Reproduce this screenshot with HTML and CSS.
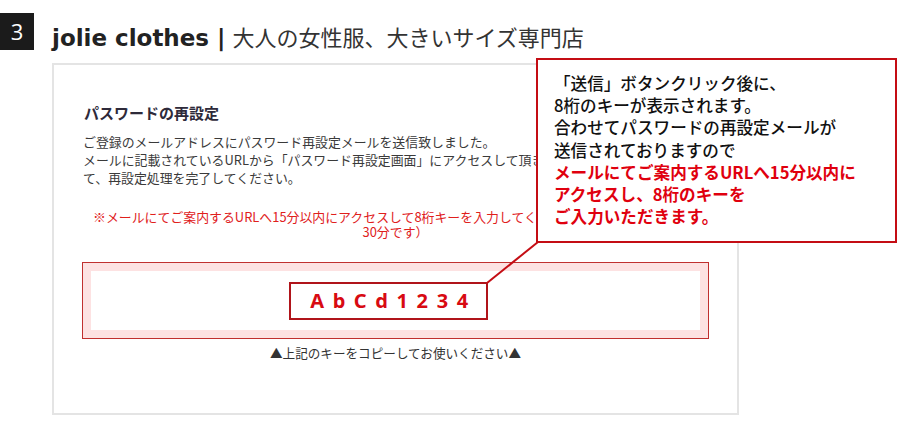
FILE: index.html
```html
<!DOCTYPE html>
<html lang="ja">
<head>
<meta charset="utf-8">
<link rel="stylesheet" href="styles.css">
</head>
<body>
<div class="page">
  <div class="header">
    <div class="badge">3</div>
    <h1 class="title"><span class="brand">jolie clothes |</span> <span class="sub">大人の女性服、大きいサイズ専門店</span></h1>
  </div>
  <div class="card">
    <h2 class="heading">パスワードの再設定</h2>
    <p class="desc">ご登録のメールアドレスにパスワード再設定メールを送信致しました。<br>メールに記載されているURLから「パスワード再設定画面」にアクセスして頂きまし<br>て、再設定処理を完了してください。</p>
    <p class="note">※メールにてご案内するURLへ15分以内にアクセスして8桁キーを入力してください。（キーの有効期限は<br>30分です）</p>
    <div class="keyframe">
      <div class="keyinner">
        <div class="key">A b C d 1 2 3 4</div>
      </div>
    </div>
    <p class="caption">▲上記のキーをコピーしてお使いください▲</p>
  </div>
  <svg class="connector" width="900" height="425" viewBox="0 0 900 425"><line x1="487" y1="283" x2="538" y2="242" stroke="#c40d14" stroke-width="2"/></svg>
  <div class="callout">
    <p>「送信」ボタンクリック後に、<br>8桁のキーが表示されます。<br>合わせてパスワードの再設定メールが<br>送信されておりますので<br><strong>メールにてご案内するURLへ15分以内に<br>アクセスし、8桁のキーを<br>ご入力いただきます。</strong></p>
  </div>
</div>
</body>
</html>
```

FILE: styles.css
```css
html, body {
  margin: 0;
  padding: 0;
  background: #fff;
}
body {
  width: 900px;
  height: 425px;
  overflow: hidden;
  font-family: "Noto Sans CJK JP", "Noto Sans", sans-serif;
  color: #333;
}
.page {
  position: relative;
  width: 900px;
  height: 425px;
  padding-top: 13px;
  box-sizing: border-box;
}
.header {
  display: flex;
  align-items: center;
  height: 37px;
}
.badge {
  width: 34px;
  height: 37px;
  background: #1b1b1b;
  color: #fff;
  font-family: "Open Sans", "Noto Sans", sans-serif;
  font-size: 22px;
  line-height: 37px;
  text-align: center;
}
.title {
  margin: 0 0 0 18px;
  font-size: 22px;
  font-weight: normal;
  line-height: 30px;
  white-space: nowrap;
  position: relative;
  top: 5px;
}
.brand {
  font-family: "DejaVu Sans", "Open Sans", sans-serif;
  font-weight: 700;
  font-size: 23px;
  color: #222;
}
.sub {
  font-family: "Noto Sans CJK JP", sans-serif;
  color: #333;
  font-weight: 400;
  margin-left: 2px;
}
.card {
  margin: 13px 0 0 52px;
  width: 687px;
  height: 352px;
  box-sizing: border-box;
  border: 2px solid #e4e4e4;
  padding: 38px 28px 0 28px;
}
.heading {
  margin: 0 0 0 2px;
  font-size: 15px;
  line-height: 20px;
  font-weight: 700;
  color: #2e2a3a;
}
.desc {
  margin: 10px 0 0 1px;
  font-size: 12.9px;
  line-height: 18px;
  color: #3a3a3a;
  white-space: nowrap;
}
.note {
  margin: 22px 0 0 0;
  font-size: 12.9px;
  line-height: 15px;
  color: #e0201c;
  text-align: center;
  white-space: nowrap;
}
.keyframe {
  margin-top: 23px;
  border: 1px solid #c0302f;
  background: #fde2e2;
  padding: 8px;
}
.keyinner {
  background: #fff;
  height: 59px;
  display: flex;
  align-items: center;
  justify-content: center;
}
.key {
  margin-right: 15px;
  width: 199px;
  height: 38px;
  box-sizing: border-box;
  border: 2px solid #b0141a;
  display: flex;
  align-items: center;
  justify-content: center;
  padding-left: 4px;
  font-family: "Noto Sans", sans-serif;
  font-size: 20px;
  font-weight: 700;
  color: #d80a12;
  letter-spacing: 1.7px;
  white-space: pre;
}
.caption {
  margin: 5px 0 0 0;
  font-size: 12.6px;
  line-height: 18px;
  color: #333;
  text-align: center;
}
.connector {
  position: absolute;
  left: 0;
  top: 0;
  pointer-events: none;
}
.callout {
  position: absolute;
  left: 536px;
  top: 58px;
  width: 361px;
  height: 185px;
  box-sizing: border-box;
  border: 2px solid #c40d14;
  background: #fff;
  padding: 12px 10px 0 16px;
}
.callout p {
  margin: 0;
  font-size: 16.6px;
  line-height: 22.2px;
  font-weight: 500;
  color: #111;
  white-space: nowrap;
}
.callout strong {
  font-weight: 700;
  color: #e0000e;
}
```
